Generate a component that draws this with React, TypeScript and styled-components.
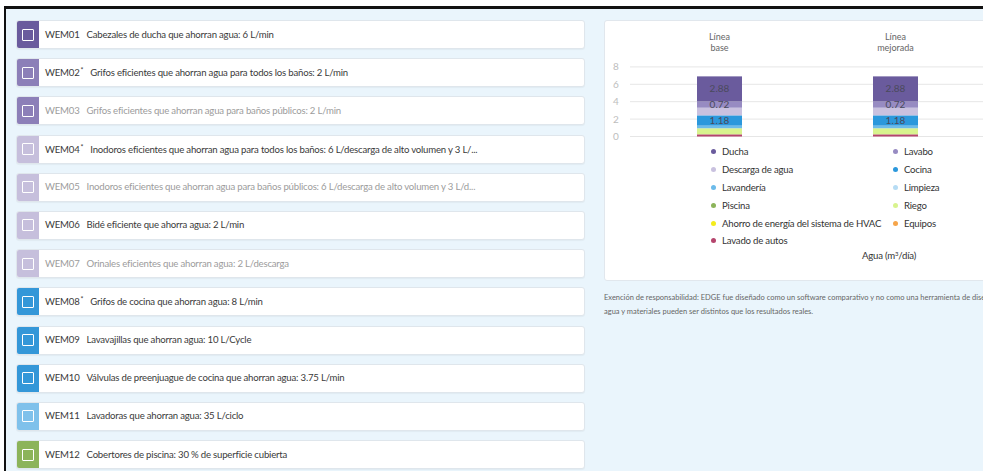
import React from "react";
import styled, { createGlobalStyle } from "styled-components";

const GlobalStyle = createGlobalStyle`
  html, body { margin: 0; padding: 0; background: #fff; }
  body { font-family: Lato, "Noto Sans", sans-serif; overflow: hidden; }
  #root { height: 100vh; }
`;

// ---- data ----
type Measure = {
  code: string;
  label: string;
  color: string;
  star?: boolean;
  muted?: boolean;
};

const MEASURES: Measure[] = [
  { code: "WEM01", label: "Cabezales de ducha que ahorran agua: 6 L/min", color: "#6a5b9d" },
  { code: "WEM02", star: true, label: "Grifos eficientes que ahorran agua para todos los baños: 2 L/min", color: "#8c7fb8" },
  { code: "WEM03", muted: true, label: "Grifos eficientes que ahorran agua para baños públicos: 2 L/min", color: "#8c7fb8" },
  { code: "WEM04", star: true, label: "Inodoros eficientes que ahorran agua para todos los baños: 6 L/descarga de alto volumen y 3 L/...", color: "#c6bfdc" },
  { code: "WEM05", muted: true, label: "Inodoros eficientes que ahorran agua para baños públicos: 6 L/descarga de alto volumen y 3 L/d...", color: "#c6bfdc" },
  { code: "WEM06", label: "Bidé eficiente que ahorra agua: 2 L/min", color: "#c6bfdc" },
  { code: "WEM07", muted: true, label: "Orinales eficientes que ahorran agua: 2 L/descarga", color: "#c6bfdc" },
  { code: "WEM08", star: true, label: "Grifos de cocina que ahorran agua: 8 L/min", color: "#3497d8" },
  { code: "WEM09", label: "Lavavajillas que ahorran agua: 10 L/Cycle", color: "#3497d8" },
  { code: "WEM10", label: "Válvulas de preenjuague de cocina que ahorran agua: 3.75 L/min", color: "#3497d8" },
  { code: "WEM11", label: "Lavadoras que ahorran agua: 35 L/ciclo", color: "#7fc1eb" },
  { code: "WEM12", label: "Cobertores de piscina: 30 % de superficie cubierta", color: "#8cb45a" }
];

const LEGEND = [
  { name: "Ducha", color: "#6a5b9d" },
  { name: "Lavabo", color: "#978bc2" },
  { name: "Descarga de agua", color: "#c9c1df" },
  { name: "Cocina", color: "#2b98dc" },
  { name: "Lavandería", color: "#6cbbea" },
  { name: "Limpieza", color: "#b6dcf4" },
  { name: "Piscina", color: "#8cb45a" },
  { name: "Riego", color: "#d8f38e" },
  { name: "Ahorro de energía del sistema de HVAC", color: "#f4ec1c" },
  { name: "Equipos", color: "#f6a54a" },
  { name: "Lavado de autos", color: "#b5456d" }
];

// stacked from the bottom up
const SEGMENTS = [
  { value: 0.25, color: "#b5456d" },
  { value: 0.7, color: "#d8f38e" },
  { value: 0.3, color: "#6cbbea" },
  { value: 1.18, color: "#2b98dc", label: "1.18" },
  { value: 0.88, color: "#c9c1df" },
  { value: 0.72, color: "#978bc2", label: "0.72" },
  { value: 2.88, color: "#6a5b9d", label: "2.88" }
];

// ---- layout ----
const Frame = styled.div`
  margin: 6px 0 0 4px;
  height: calc(100% - 6px);
  box-sizing: border-box;
  border-top: 3px solid #111;
  border-left: 2px solid #111;
  background: #eaf5fc;
  display: flex;
  align-items: flex-start;
  gap: 19px;
  padding: 11px 0 0 10px;
  overflow: hidden;
`;

const MeasureList = styled.div`
  width: 569px;
  flex: none;
  display: flex;
  flex-direction: column;
  gap: 9.2px;
`;

const MeasureRow = styled.div`
  display: flex;
  align-items: center;
  height: 29px;
  box-sizing: border-box;
  background: #fff;
  border: 1px solid #dfe6ec;
  border-radius: 3px;
  box-shadow: 0 1px 1px rgba(0, 0, 0, 0.04);
  overflow: hidden;
`;

const Swatch = styled.div<{ $color: string }>`
  width: 22px;
  height: 100%;
  flex: none;
  background: ${(p) => p.$color};
  display: flex;
  align-items: center;
  justify-content: center;
`;

const Check = styled.span`
  width: 12px;
  height: 12px;
  box-sizing: border-box;
  border: 1.5px solid #fff;
  border-radius: 1px;
`;

const MeasureText = styled.span<{ $muted?: boolean }>`
  margin: 0 0 1px 6px;
  font-size: 9.6px;
  letter-spacing: -0.2px;
  white-space: nowrap;
  color: ${(p) => (p.$muted ? "#9c9c9c" : "#3a3a3a")};
`;

const Code = styled.span`
  margin-right: 7px;
  sup {
    font-size: 7px;
    vertical-align: 3px;
    margin-left: 1px;
  }
`;

const SidePanel = styled.div`
  width: 600px;
  flex: none;
`;

const ChartCard = styled.div`
  height: 261px;
  box-sizing: border-box;
  background: #fff;
  border: 1px solid #e1e7ed;
  border-radius: 3px;
`;

const Legend = styled.div`
  display: grid;
  grid-template-columns: 182px auto;
  grid-auto-rows: 17.8px;
  padding-left: 106px;
`;

const LegendItem = styled.div<{ $color: string }>`
  display: flex;
  align-items: center;
  font-size: 9.6px;
  letter-spacing: -0.2px;
  color: #333;
  white-space: nowrap;
  &::before {
    content: "";
    width: 5px;
    height: 5px;
    border-radius: 50%;
    margin-right: 6px;
    background: ${(p) => p.$color};
  }
`;

const AxisTitle = styled.div`
  margin: -2px 0 0 257px;
  height: 12px;
  line-height: 12px;
  font-size: 9.6px;
  letter-spacing: -0.2px;
  color: #333;
  sup {
    font-size: 6px;
    vertical-align: 3px;
  }
`;

const Disclaimer = styled.p`
  margin: 10px 0 0;
  font-size: 7.5px;
  line-height: 14px;
  color: #666;
  white-space: nowrap;
`;

// ---- chart drawing ----
const ZERO_Y = 115.5;
const UNIT = 8.7;
const BARS = [
  { x: 92, title: ["Línea", "base"] },
  { x: 268, title: ["Línea", "mejorada"] }
];

function StackedBars() {
  return (
    <svg width="600" height="122" style={{ display: "block" }}>
      {[0, 2, 4, 6, 8].map((v) => {
        const y = ZERO_Y - v * UNIT;
        return (
          <g key={v}>
            <line x1="25" x2="600" y1={y} y2={y} stroke="#e6e6e6" strokeWidth="1" />
            <text x="8" y={y + 3.5} fontSize="10" fill="#bdbdbd" fontFamily="Lato, sans-serif">
              {v}
            </text>
          </g>
        );
      })}

      {BARS.map((bar) => {
        let acc = 0;
        return (
          <g key={bar.x}>
            <text x={bar.x + 22.5} y="19" fontSize="9" fill="#666" textAnchor="middle" fontFamily="Lato, sans-serif">
              {bar.title[0]}
            </text>
            <text x={bar.x + 22.5} y="30" fontSize="9" fill="#666" textAnchor="middle" fontFamily="Lato, sans-serif">
              {bar.title[1]}
            </text>
            {SEGMENTS.map((s, i) => {
              const h = s.value * UNIT;
              const y = ZERO_Y - acc - h;
              acc += h;
              return <rect key={i} x={bar.x} y={y} width="45" height={h} fill={s.color} />;
            })}
          </g>
        );
      })}

      {BARS.map((bar) => {
        let acc = 0;
        return SEGMENTS.map((s, i) => {
          const h = s.value * UNIT;
          const mid = ZERO_Y - acc - h / 2;
          acc += h;
          if (!s.label) return null;
          return (
            <text
              key={`${bar.x}-${i}`}
              x={bar.x + 22.5}
              y={mid + 3.5}
              fontSize="10"
              fill="#4a4a5c"
              textAnchor="middle"
              fontFamily="Lato, sans-serif"
            >
              {s.label}
            </text>
          );
        });
      })}
    </svg>
  );
}

export default function App() {
  return (
    <>
      <GlobalStyle />
      <Frame>
        <MeasureList>
          {MEASURES.map((m) => (
            <MeasureRow key={m.code}>
              <Swatch $color={m.color}>
                <Check />
              </Swatch>
              <MeasureText $muted={m.muted}>
                <Code>
                  {m.code}
                  {m.star && <sup>*</sup>}
                </Code>
                {m.label}
              </MeasureText>
            </MeasureRow>
          ))}
        </MeasureList>

        <SidePanel>
          <ChartCard>
            <StackedBars />
            <Legend>
              {LEGEND.map((item) => (
                <LegendItem key={item.name} $color={item.color}>
                  {item.name}
                </LegendItem>
              ))}
            </Legend>
            <AxisTitle>
              Agua (m<sup>3</sup>/día)
            </AxisTitle>
          </ChartCard>
          <Disclaimer>
            Exención de responsabilidad: EDGE fue diseñado como un software comparativo y no como una herramienta de diseño. Los resultados de energía,
            <br />
            agua y materiales pueden ser distintos que los resultados reales.
          </Disclaimer>
        </SidePanel>
      </Frame>
    </>
  );
}
